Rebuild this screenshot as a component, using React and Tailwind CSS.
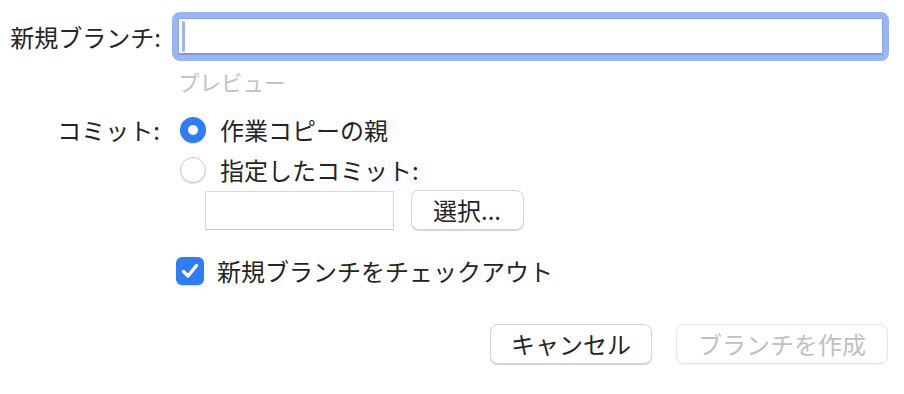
import React from "react";

export default function App() {
  return (
    <div className="w-[904px] h-[394px] bg-white text-[24px] leading-none text-[#242424] font-['Noto_Sans_CJK_JP','Noto_Sans',sans-serif] overflow-hidden">
      <div className="pt-[12px]">
        {/* Row 1 */}
        <div className="flex h-[49px] items-center">
          <div className="w-[161px] text-right">新規ブランチ:</div>
          <div className="ml-[11px] w-[717px] h-[49px] rounded-[8px] border-[6px] border-[#9ab5f5]">
            <div className="h-full w-full border border-[#8aa5ea] border-b-[2px] border-b-[#7f99e0] bg-white flex items-center pl-[3px]">
              <span className="block w-[3px] h-[31px] rounded-full bg-[#9ab5f5]" />
            </div>
          </div>
        </div>

        {/* Row 2: preview */}
        <div className="flex h-[30px] mt-[6px] items-center">
          <div className="ml-[178px] text-[21.5px] text-[#c2c2c2]">プレビュー</div>
        </div>

        {/* Row 3 */}
        <div className="flex h-[36px] mt-[15px] items-center">
          <div className="w-[160px] text-right">コミット:</div>
          <div className="ml-[20px] w-[26px] h-[26px] rounded-full bg-[#2f7df6] flex items-center justify-center shadow-[0_1px_1px_rgba(0,0,0,0.15)]">
            <span className="block w-[10px] h-[10px] rounded-full bg-white" />
          </div>
          <div className="ml-[14px]">作業コピーの親</div>
        </div>

        {/* Row 4 */}
        <div className="flex h-[36px] mt-[4px] items-center">
          <div className="ml-[180px] w-[26px] h-[26px] rounded-full bg-white border border-[#c9c9c9] shadow-[0_1px_1px_rgba(0,0,0,0.12)]" />
          <div className="ml-[14px]">指定したコミット:</div>
        </div>

        {/* Row 5 */}
        <div className="flex h-[40px] mt-[2px] items-end">
          <div className="ml-[205px] w-[189px] h-[39px] bg-white border border-[#dadada] border-b-[#c4c4c4]" />
          <button className="ml-[17px] w-[113px] h-[40px] rounded-[8px] bg-white border border-[#d6d6d6] shadow-[0_1px_1px_rgba(0,0,0,0.18)] flex items-center pl-[21px] text-[#242424]">
            選択...
          </button>
        </div>

        {/* Row 6 */}
        <div className="flex h-[36px] mt-[23px] items-center">
          <div className="ml-[176px] w-[28px] h-[28px] rounded-[6px] bg-[#2f7df6] flex items-center justify-center shadow-[0_1px_1px_rgba(0,0,0,0.15)]">
            <svg width="20" height="20" viewBox="0 0 20 20" fill="none">
              <path d="M3.5 10.5 L8 15 L16.5 4.5" stroke="white" strokeWidth="3.4" strokeLinecap="round" strokeLinejoin="round" />
            </svg>
          </div>
          <div className="ml-[13px]">新規ブランチをチェックアウト</div>
        </div>

        {/* Row 7 */}
        <div className="flex h-[40px] mt-[35px] justify-end pr-[16px] gap-[24px]">
          <button className="w-[162px] h-[40px] rounded-[8px] bg-white border border-[#d6d6d6] shadow-[0_1px_1px_rgba(0,0,0,0.2)] flex items-center justify-center text-[#242424]">
            キャンセル
          </button>
          <button className="w-[212px] h-[40px] rounded-[8px] bg-white border border-[#e6e6e6] shadow-[0_1px_1px_rgba(0,0,0,0.06)] flex items-center justify-center text-[#c0c0c0]">
            ブランチを作成
          </button>
        </div>
      </div>
    </div>
  );
}
